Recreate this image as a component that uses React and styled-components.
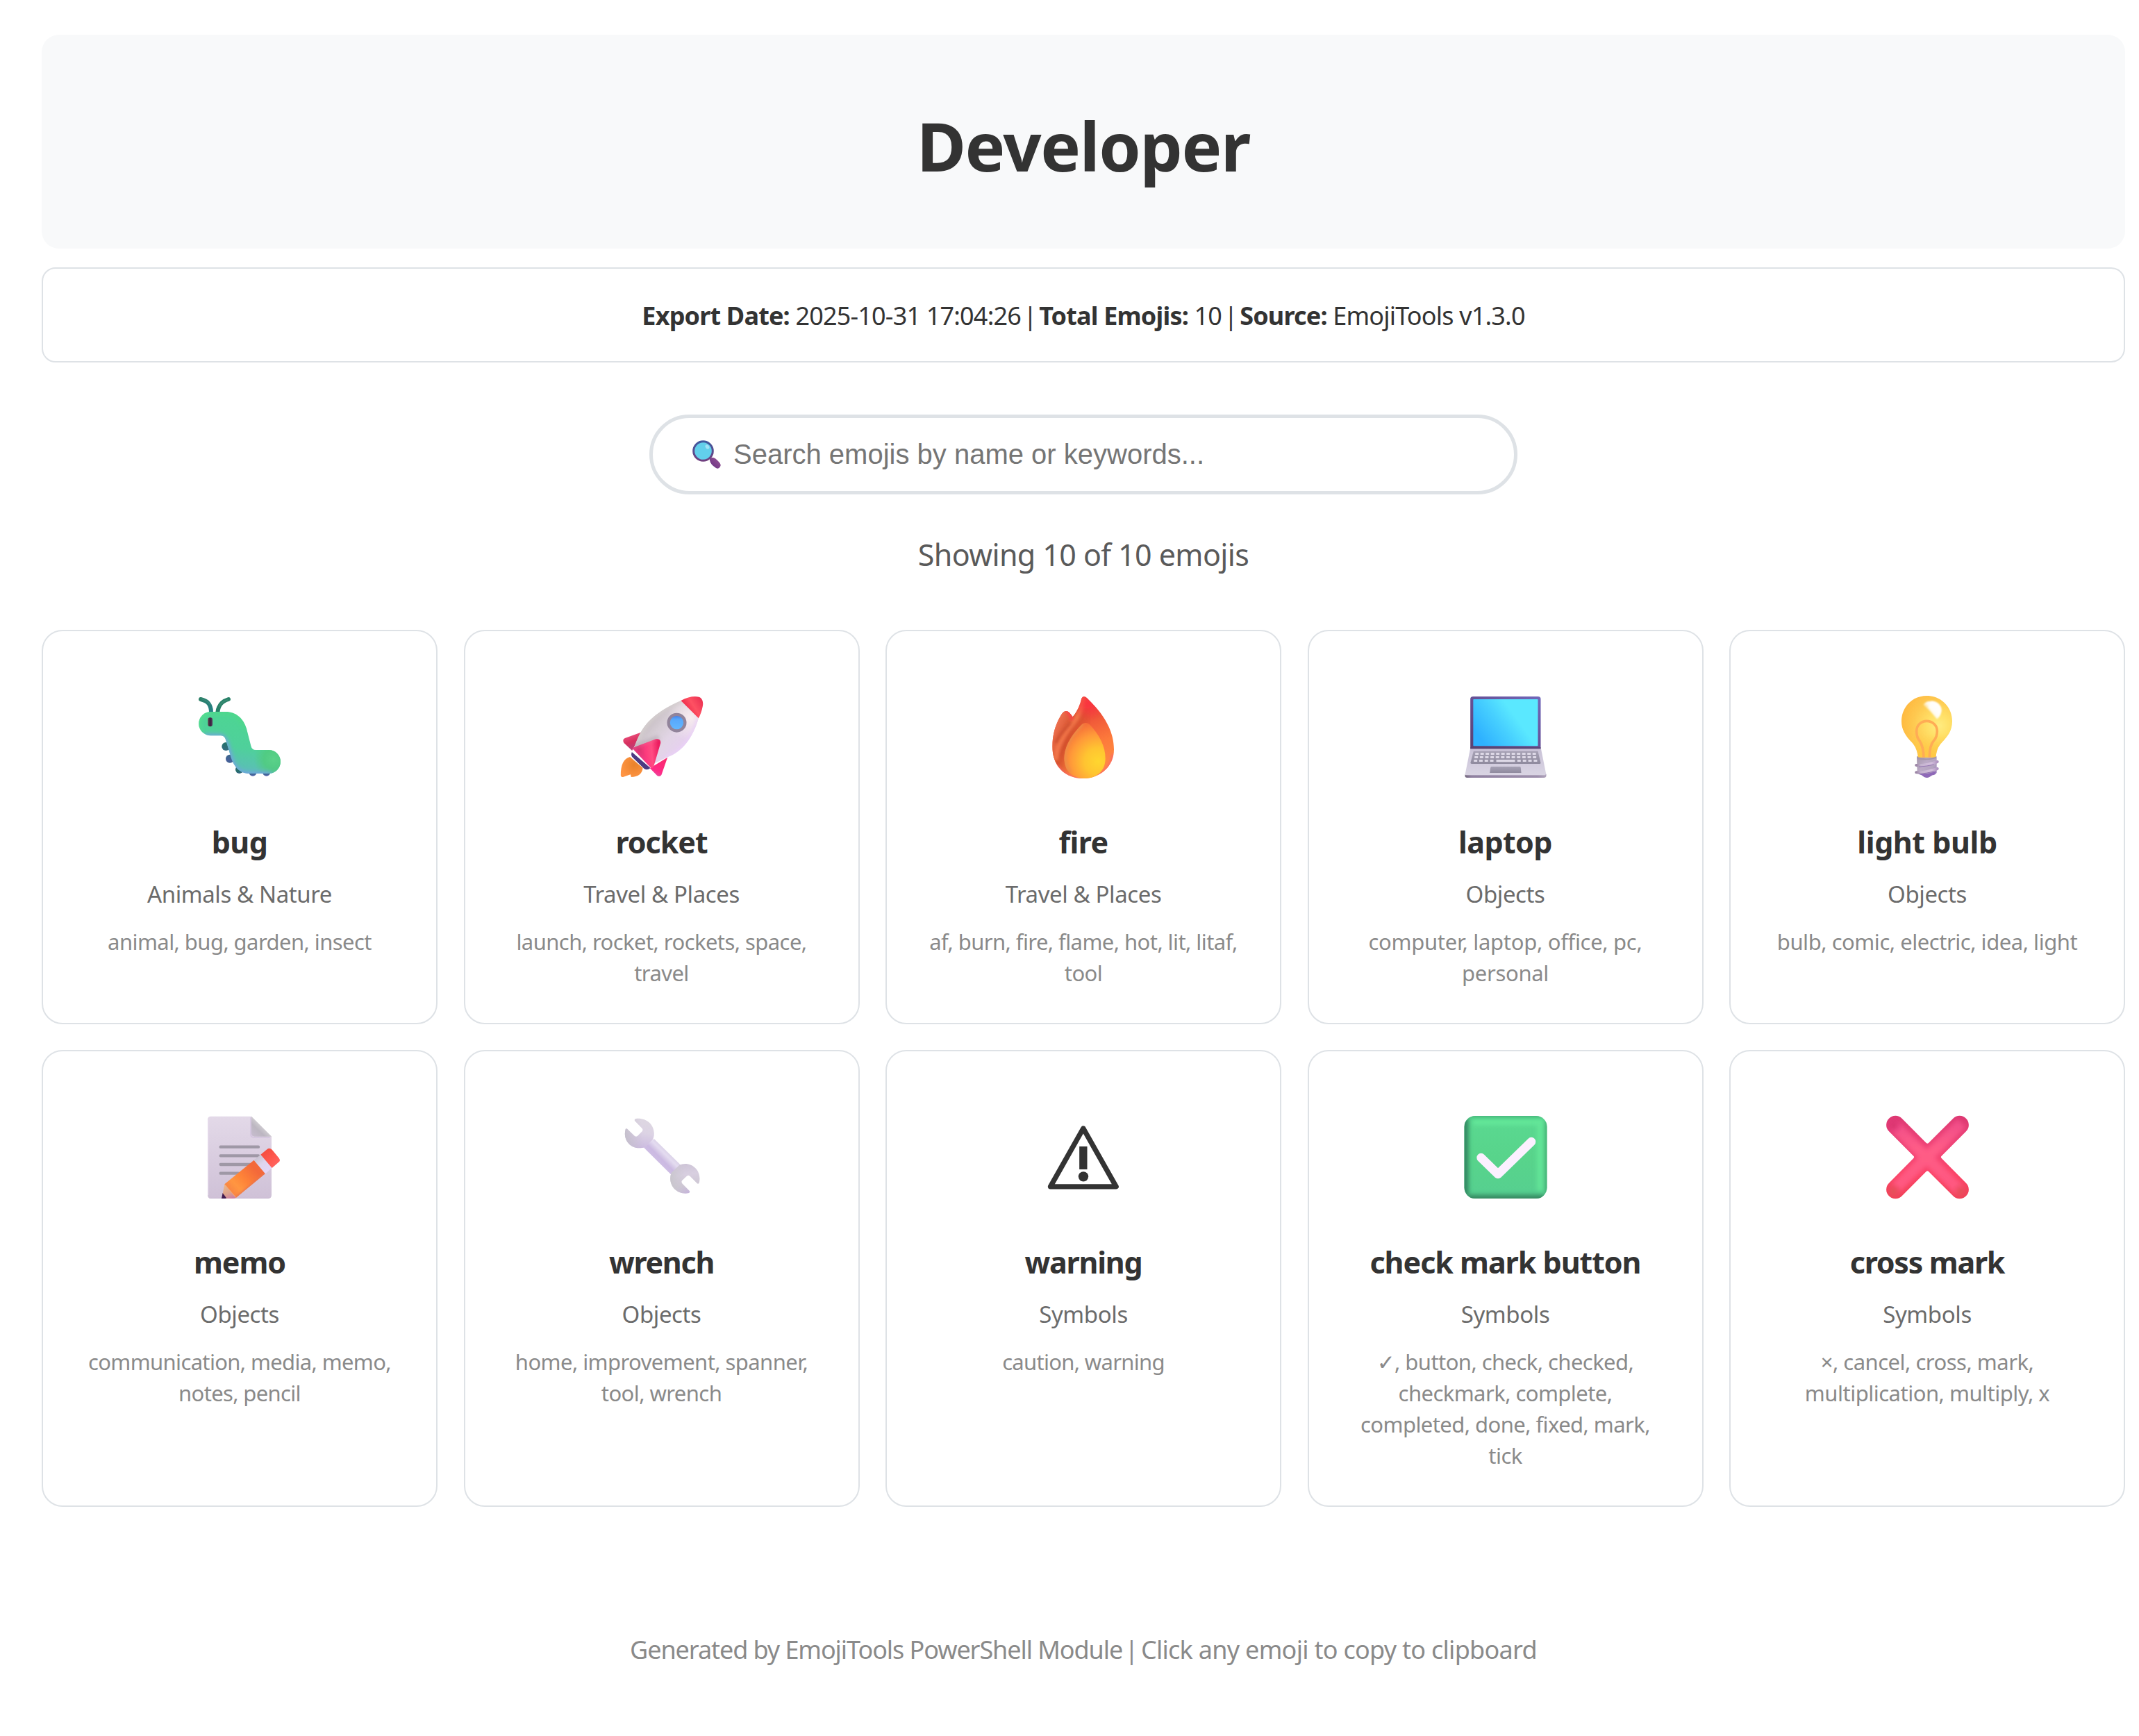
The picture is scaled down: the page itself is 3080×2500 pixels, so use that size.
import React, { useState } from 'react';
import styled, { createGlobalStyle } from 'styled-components';

const GlobalStyle = createGlobalStyle`
  * { box-sizing: border-box; }
  body {
    margin: 0;
    background: #ffffff;
    color: #333333;
    font-family: "Noto Sans", "Open Sans", "DejaVu Sans", sans-serif;
  }
`;

const Page = styled.main`
  width: 3080px;
  min-height: 2500px;
  padding: 50px 20px 0 60px;
  display: flex;
  flex-direction: column;
  align-items: stretch;
`;

const Header = styled.header`
  height: 308px;
  border-radius: 25px;
  background: #f8f9fa;
  display: flex;
  align-items: center;
  justify-content: center;
  padding-top: 10px;
`;

const Title = styled.h1`
  margin: 0;
  font-size: 97px;
  line-height: 150px;
  font-weight: 700;
  letter-spacing: -1.35px;
`;

const Info = styled.section`
  height: 137px;
  margin-top: 27px;
  padding-top: 1px;
  border: 2px solid #dee2e6;
  border-radius: 20px;
  display: flex;
  align-items: center;
  justify-content: center;
  white-space: pre;
  font-size: 36px;
  letter-spacing: -0.82px;
`;

const Divider = styled.span`
  margin: 0 -5px;
`;

const Search = styled.label`
  width: 1250px;
  height: 115px;
  margin: 75px auto 0;
  align-self: center;
  border: 5px solid #dee2e6;
  border-radius: 62px;
  padding: 0 50px 0 57px;
  display: flex;
  align-items: center;
  gap: 17px;
`;

const SearchInput = styled.input`
  flex: 1;
  border: 0;
  outline: 0;
  padding: 0;
  background: transparent;
  font: 40px "Liberation Sans", Arial, sans-serif;
  color: #333333;
  &::placeholder { color: #757575; opacity: 1; }
`;

const Count = styled.p`
  margin: 57px 0 0;
  text-align: center;
  font-size: 43px;
  line-height: 60px;
  letter-spacing: -0.6px;
  color: #5a5a5a;
`;

const Grid = styled.section`
  margin-top: 78px;
  display: grid;
  grid-template-columns: repeat(5, 570px);
  gap: 37.5px;
`;

const Card = styled.article`
  border: 2px solid #dee2e6;
  border-radius: 30px;
  padding: 71px 50px 48.5px;
  display: flex;
  flex-direction: column;
  align-items: center;
  text-align: center;
  cursor: pointer;
  background: #ffffff;
`;

const Name = styled.h2`
  margin: 43px 0 0;
  font-size: 43px;
  line-height: 60px;
  font-weight: 700;
  letter-spacing: ${(p) => p.$tracking ?? -1.05}px;
  white-space: nowrap;
`;

const Category = styled.div`
  margin-top: 20px;
  font-size: 33px;
  line-height: 50px;
  letter-spacing: -0.4px;
  color: #6b6b6b;
`;

const Keywords = styled.div`
  margin-top: 21px;
  width: 466px;
  font-size: 31px;
  line-height: 45px;
  letter-spacing: ${(p) => p.$tracking ?? -0.57}px;
  color: #8a8a8a;
  min-height: 90px;
`;

const Footer = styled.footer`
  margin-top: 176px;
  display: flex;
  justify-content: center;
  white-space: pre;
  font-size: 36px;
  line-height: 60px;
  color: #8a8a8a;
`;

const Credit = styled.span`
  letter-spacing: -1.08px;
`;

const Hint = styled.span`
  letter-spacing: -0.72px;
`;

function Art({ dx = 0, dy = 0, children }) {
  return (
    <svg width="170" height="160" viewBox={`${dx} ${dy} 510 480`} aria-hidden="true">
      {children}
    </svg>
  );
}

const LG = ({ id, a = [0, 0, 0, 1], stops, user }) => (
  <linearGradient id={id} x1={a[0]} y1={a[1]} x2={a[2]} y2={a[3]} gradientUnits={user ? 'userSpaceOnUse' : 'objectBoundingBox'}>
    {stops.map(([o, c, op = 1]) => <stop key={o} offset={o} stopColor={c} stopOpacity={op} />)}
  </linearGradient>
);
const RG = ({ id, c, r, stops }) => (
  <radialGradient id={id} cx={c[0]} cy={c[1]} r={r} gradientUnits="userSpaceOnUse">
    {stops.map(([o, col, op = 1]) => <stop key={o} offset={o} stopColor={col} stopOpacity={op} />)}
  </radialGradient>
);
const Blur = ({ id, s }) => (
  <filter id={id} filterUnits="userSpaceOnUse" x="-50" y="-50" width="620" height="600"><feGaussianBlur stdDeviation={s} /></filter>
);

const bugBody = 'M130 135H195C240 135 272 164 285 208L304 282Q308 300 325 300H381A51 51 0 0 1 381 402H298C254 402 230 370 218 332L195 256Q190 238 174 238H130A51.500 51.500 0 0 1 130 135Z';
const Bug = () => (
  <Art>
    <defs>
      <LG id="bugG" user a={[270, 150, 225, 400]} stops={[[0, '#4dd593'], [0.55, '#4fd09b'], [1, '#5ebabd']]} />
      <LG id="bugF" user a={[0, 265, 0, 414]} stops={[[0, '#237269'], [0.55, '#46609a'], [0.85, '#236d68'], [1, '#5863b5']]} />
      <LG id="bugA" user a={[80, 75, 140, 135]} stops={[[0, '#2b7f64'], [1, '#258087']]} />
      <RG id="bugT" c={[402, 340]} r="85" stops={[[0, '#5bd28a'], [0.5, '#50cb7c', 0.8], [1, '#50cb7c', 0]]} />
      <LG id="bugE" a={[0, 0, 1, 0]} stops={[[0, '#683e4d'], [0.5, '#35223c'], [1, '#5b3d60']]} />
      <Blur id="bugB" s="10" />
      <clipPath id="bugC"><path d={bugBody} /></clipPath>
    </defs>
    <g fill="url(#bugF)">
      <circle cx="196" cy="285" r="18" /><circle cx="213" cy="338" r="18" /><circle cx="254" cy="385" r="17" />
      <circle cx="312" cy="396" r="17" /><circle cx="371" cy="396" r="17" />
    </g>
    <g fill="none" strokeLinecap="round" strokeWidth="18">
      <path d="M87 81C116 88 132 102 132 138" stroke="url(#bugA)" />
      <path d="M207 81C178 90 163 106 160 138" stroke="#288068" />
      <path d="M204 83C182 90 172 99 168 112" stroke="#45957c" strokeWidth="5" opacity=".6" />
      <path d="M91 79C107 85 120 90 128 104" stroke="#489383" strokeWidth="4" opacity=".55" />
    </g>
    <path d={bugBody} fill="url(#bugG)" />
    <path d={bugBody} fill="url(#bugT)" />
    <g clipPath="url(#bugC)">
      <path d="M100 246H168Q184 246 193 272L212 340C228 394 252 410 300 410H390" fill="none" stroke="#75a0e6" strokeWidth="28" filter="url(#bugB)" />
      <path d="M130 138H198C238 139 266 167 280 210" fill="none" stroke="#4fdb80" strokeWidth="8" filter="url(#bugB)" />
      <path d="M124 138A50 50 0 0 0 88 220" fill="none" stroke="#5ae688" strokeWidth="10" filter="url(#bugB)" />
    </g>
    <rect x="118" y="160" width="20" height="39" rx="10" fill="url(#bugE)" />
  </Art>
);

const rocketBody = 'M128 292C155 205 198 145 330 87L406 163C382 247 336 310 267 333L207 362Z';
const rocketFin = 'M119 292L218 254C236 249 244 259 242 271L212 372Q206 382 197 374Z';
const Rocket = () => (
  <Art dx={-7.5}>
    <defs>
      <LG id="rkB" user a={[180, 175, 330, 310]} stops={[[0, '#c5bcc1'], [0.3, '#d6cdd5'], [0.6, '#e2d5e6'], [1, '#e7cff0']]} />
      <LG id="rkN" user a={[352, 135, 422, 90]} stops={[[0, '#ec2648'], [0.5, '#fe5163'], [1, '#ed3454']]} />
      <LG id="rkF" user a={[148, 315, 235, 308]} stops={[[0, '#d8356f'], [0.35, '#fc3b7d'], [0.65, '#ff4c82'], [1, '#ec1d60']]} />
      <LG id="rkL" user a={[110, 240, 126, 288]} stops={[[0, '#e54a76'], [0.5, '#d9305f'], [1, '#bf3c71']]} />
      <LG id="rkR" user a={[250, 340, 218, 412]} stops={[[0, '#fa2b70'], [0.7, '#ff2a86'], [1, '#e84ba0']]} />
      <RG id="rkO" c={[128, 365]} r="62" stops={[[0, '#e9822b'], [1, '#ff9544']]} />
      <LG id="rkW" stops={[[0, '#3d70e6'], [0.3, '#58a8fb'], [1, '#65b9ff']]} />
      <RG id="rkH" c={[370, 160]} r="100" stops={[[0, '#f7ecef'], [1, '#f7ecef', 0]]} />
      <Blur id="rkBl" s="8" />
      <clipPath id="rkC"><path d={rocketBody} /></clipPath>
      <clipPath id="rkFC"><path d={rocketFin} /></clipPath>
    </defs>
    <path d="M110 330C82 337 70 365 70 410Q71 419 80 417L112 406L115 417C145 416 164 402 165 377Z" fill="url(#rkO)" />
    <path d="M118 309Q112 325 123 334L171 381Q185 390 198 378Z" fill="#4b3b82" />
    <path d="M163 222L88 249Q75 255 84 270L119 303Z" fill="url(#rkL)" />
    <path d="M272 332L246 407Q240 418 228 412L196 379Z" fill="url(#rkR)" />
    <path d={rocketBody} fill="url(#rkB)" />
    <path d={rocketBody} fill="url(#rkH)" />
    <g clipPath="url(#rkC)">
      <path d="M130 290C158 210 198 146 330 84" stroke="#d6d0d0" strokeWidth="16" fill="none" filter="url(#rkBl)" />
      <path d="M406 163C380 245 336 310 267 333" stroke="#ead1f9" strokeWidth="12" fill="none" filter="url(#rkBl)" />
      <path d="M115 292L234 246" stroke="#b3a7b0" strokeWidth="22" opacity=".6" filter="url(#rkBl)" />
    </g>
    <path d="M330 87C359 71 386 66 408 71C421 75 428 91 424 111Q418 142 406 163Z" fill="url(#rkN)" />
    <circle cx="312" cy="182" r="35.500" fill="url(#rkW)" stroke="#92849b" strokeWidth="13" />
    <path d={rocketFin} fill="url(#rkF)" />
    <g clipPath="url(#rkFC)">
      <path d="M119 292L197 375" stroke="#ff3a9a" strokeWidth="12" opacity=".7" filter="url(#rkBl)" />
      <path d="M119 292L228 250" stroke="#ee6896" strokeWidth="9" opacity=".8" filter="url(#rkBl)" />
    </g>
  </Art>
);

const flame = 'M242 69Q248 69 255 75C321 138 372 211 372 298C372 370 315 423 239 423C160 423 106 369 106 285C106 226 124 180 147 144Q162 124 179 138L194 157C213 135 226 105 232 77Q236 69 242 69Z';
const flameIn = 'M235 188Q251 178 266 189C310 235 335 285 335 337C335 388 300 423 247 423C193 423 157 390 157 335C158 280 196 226 235 188Z';
const Fire = () => (
  <Art dx={-15}>
    <defs>
      <LG id="fiG" user a={[190, 90, 300, 390]} stops={[[0, '#ed3c43'], [0.3, '#ef5539'], [0.65, '#fd7b3b'], [1, '#ff8c43']]} />
      <LG id="fiL" user a={[105, 230, 245, 290]} stops={[[0, '#ed704e'], [0.45, '#d3502c'], [1, '#d9552e', 0]]} />
      <RG id="fiI" c={[304, 350]} r="168" stops={[[0, '#ffd62f'], [0.35, '#ffc431'], [0.7, '#ff9a39'], [1, '#f67039']]} />
      <RG id="fiR" c={[262, 100]} r="75" stops={[[0, '#fa343f'], [1, '#fa343f', 0]]} />
      <Blur id="fiB" s="7" />
      <clipPath id="fiC"><path d={flame} /></clipPath>
      <clipPath id="fiIC"><path d={flameIn} /></clipPath>
    </defs>
    <path d={flame} fill="url(#fiG)" />
    <g clipPath="url(#fiC)">
      <rect x="90" y="120" width="180" height="310" fill="url(#fiL)" />
      <path d="M241 70C233 138 208 169 177 207C143 250 121 298 122 345" fill="none" stroke="#f2764a" strokeWidth="22" filter="url(#fiB)" />
      <path d="M186 181C165 204 141 228 120 270" fill="none" stroke="#bf4127" strokeWidth="8" filter="url(#fiB)" />
      <path d="M166 128Q187 147 190 170" fill="none" stroke="#ff4148" strokeWidth="13" filter="url(#fiB)" />
      <path d={flame} fill="url(#fiR)" />
      <path d="M120 365C165 425 205 426 245 424C318 424 365 373 370 318" fill="none" stroke="#fa6170" strokeWidth="12" filter="url(#fiB)" />
    </g>
    <path d={flameIn} fill="url(#fiI)" />
    <g clipPath="url(#fiIC)">
      <path d="M236 186C170 252 130 329 183 397" fill="none" stroke="#e99049" strokeWidth="14" filter="url(#fiB)" />
    </g>
  </Art>
);

const keyRow = (y, x0, step, n) =>
  Array.from({ length: n }, (_, i) => <rect key={i} x={x0 + i * step} y={y} width="15" height="9" rx="1.500" fill="#ded9e7" />);
const Laptop = () => (
  <Art dx={-22.5}>
    <defs>
      <LG id="lpF" a={[1, 0, 0, 1]} stops={[[0, '#7168bb'], [0.5, '#665196'], [1, '#5a4170']]} />
      <LG id="lpS" user a={[285, 170, 140, 275]} stops={[[0, '#5ae8ff'], [0.4, '#47d0ff'], [1, '#2eb1ff']]} />
      <LG id="lpK" stops={[[0, '#a6a1b4'], [1, '#8f8a9e']]} />
      <LG id="lpB" stops={[[0, '#c9c2d7'], [1, '#d9d4e3']]} />
      <LG id="lpE" a={[0, 0, 1, 0]} stops={[[0, '#75697f'], [0.08, '#8f80a0'], [0.9, '#9d8fac'], [1, '#b1a5bd']]} />
    </defs>
    <path d="M80 293L58 403V409H407V403L385 293Z" fill="url(#lpB)" />
    <path d="M57 405Q57 409 63 409H402L408 404V412Q407 420 398 420H66Q57 420 57 412Z" fill="url(#lpE)" />
    <path d="M80 295V80Q80 69 92 69H372Q384 69 384 80V295Z" fill="url(#lpF)" />
    <path d="M80 288H384V295H80Z" fill="#59456e" opacity=".7" />
    <rect x="92.500" y="81" width="279.500" height="201.500" rx="2" fill="url(#lpS)" />
    <path d="M94 305H372L384 356Q384 360 379 360H86Q80 360 81 355Z" fill="url(#lpK)" />
    {keyRow(312, 101, 22.5, 12)}
    {keyRow(327, 98, 22.9, 12)}
    {keyRow(342, 95, 23.4, 4)}
    <rect x="192" y="342" width="81" height="10" rx="1.500" fill="#ded9e7" />
    {keyRow(342, 283, 23.6, 4)}
    <path d="M171 372H294Q298 373 298 377L300 399H164L167 377Q168 372 171 372Z" fill="url(#lpK)" />
  </Art>
);

const bulbGlass = 'M253 66C317 66 363 116 363 176C363 219 342 242 319 267C300 288 296 304 292 332H216C212 302 205 285 188 266C160 237 144 211 144 176C144 115 190 66 253 66Z';
const Bulb = () => (
  <Art>
    <defs>
      <RG id="buG" c={[306, 195]} r="170" stops={[[0, '#ffec80'], [0.3, '#ffdf66'], [0.65, '#fec950'], [1, '#ffb940']]} />
      <LG id="buH" user a={[302, 102, 258, 142]} stops={[[0, '#ffffff'], [0.55, '#ffffff', 0.9], [1, '#ffffff', 0]]} />
      <LG id="buB" user a={[210, 340, 305, 400]} stops={[[0, '#a89aae'], [0.35, '#bbaac6'], [0.7, '#b3a3c0'], [1, '#9675bb']]} />
      <LG id="buR" user a={[202, 0, 304, 0]} stops={[[0, '#8f7799'], [0.25, '#c4b3cf'], [0.7, '#d3bfdc'], [1, '#aa8dbd']]} />
      <LG id="buY" user a={[0, 230, 0, 332]} stops={[[0, '#ffcf45', 0], [1, '#ffcb43', 0.8]]} />
      <Blur id="buBl" s="3" />
    </defs>
    <path d="M210 328H296V398Q291 408 278 409Q264 420 253 420Q241 419 232 409L212 402Z" fill="url(#buB)" />
    <path d="M214 402Q245 408 292 393Q291 409 276 409Q262 420 253 420Q241 419 231 409Z" fill="#8e68b8" />
    <path d={bulbGlass} fill="url(#buG)" />
    <path d={bulbGlass} fill="url(#buY)" />
    <path d="M238 105Q247 89 272 89C299 90 317 108 316 132Q313 153 298 167Q269 133 238 105Z" fill="url(#buH)" filter="url(#buBl)" />
    <path d="M274 89C299 90 316 108 316 130Q312 153 297 164L259 116Z" fill="#fff" opacity=".65" filter="url(#buBl)" />
    <path d="M240 332Q239 286 222 260C211 248 209 233 209 218C209 194 228 175 253 175S298 194 298 218Q298 243 284 259Q265 280 265 332" fill="none" stroke="#ffac55" strokeWidth="11" />
    <path d="M213 330Q250 345 294 329V336Q248 350 212 339Z" fill="#a596aa" />
    <g fill="none" stroke="url(#buR)" strokeWidth="12" strokeLinecap="round">
      <path d="M208 366Q249 369 299 351" />
      <path d="M208 397Q249 399 299 381" />
    </g>
    <g fill="none" stroke="#8968aa" strokeWidth="2.500"><path d="M219 373Q256 370 284 363" /><path d="M219 404Q256 400 284 393" /></g>
  </Art>
);

const Memo = () => (
  <Art dy={-15}>
    <defs>
      <LG id="meP" stops={[[0, '#e3d9e8'], [1, '#cfc1d7']]} />
      <LG id="meC" user a={[350, 96, 312, 135]} stops={[[0, '#cecbd0'], [0.4, '#bcb6c1'], [1, '#c6bccd']]} />
      <LG id="meY" user a={[320, 280, 215, 375]} stops={[[0, '#f3693a'], [0.45, '#fe8338'], [0.75, '#ff9641'], [1, '#f98543']]} />
      <LG id="meM" user a={[330, 230, 378, 290]} stops={[[0, '#c9c3d0'], [0.45, '#ded5ee'], [1, '#e3d6f8']]} />
      <LG id="meR" user a={[360, 205, 410, 265]} stops={[[0, '#f54d3f'], [0.6, '#ff594f'], [1, '#ff6460']]} />
      <LG id="meW" user a={[190, 350, 215, 408]} stops={[[0, '#edb889'], [0.6, '#dca28b'], [1, '#ce82a2']]} />
      <Blur id="meB" s="5" />
      <clipPath id="meCl"><path d="M190 346L317 242L366 300L239 405Z" /></clipPath>
    </defs>
    <path d="M131 53H306L393 140V393Q393 408 378 408H132Q117 408 117 393V67Q117 53 131 53Z" fill="url(#meP)" />
    <path d="M119 67V394" stroke="#eadff0" strokeWidth="4" opacity=".7" />
    <path d="M124 406H382" stroke="#c6b5d0" strokeWidth="4" opacity=".6" />
    <path d="M303 58V129Q303 144 318 144H386" stroke="#cbb9da" strokeWidth="5" fill="none" opacity=".6" />
    <path d="M306 53L393 140H320Q306 140 306 126Z" fill="url(#meC)" />
    <g stroke="#9f98a6" strokeWidth="13" strokeLinecap="round">
      <path d="M173 185H336M173 223H336M173 261H300M173 299H250" />
    </g>
    <path d="M190 346L317 242L366 300L239 405Z" fill="url(#meY)" />
    <g clipPath="url(#meCl)"><path d="M366 300L239 405" stroke="#ea744e" strokeWidth="9" filter="url(#meB)" /></g>
    <path d="M190 346L239 405Q235 408 226 408H178L183 382Z" fill="url(#meW)" />
    <path d="M182 384L198 406Q196 408 193 408H177Z" fill="#421b50" />
    <path d="M191 347L240 404" stroke="#f7a66b" strokeWidth="3" />
    <path d="M317 242L346 218L395 275L366 301Z" fill="url(#meM)" />
    <path d="M346 218L375 194Q384 187 394 196L425 233Q432 242 426 249L395 276Z" fill="url(#meR)" />
  </Art>
);

const wrenchTop = 'M136 63C178 58 214 86 214 128C214 139 211 148 207 155L176 187C167 189 157 190 151 190C114 190 88 162 88 128Q88 116 91 107Q95 104 98 107L130 138Q137 143 143 137L163 117Q167 111 163 106L131 73Q127 66 136 63Z';
const wrenchEnd = 'M362 385C320 392 284 362 284 321Q284 308 289 297L323 264Q335 258 348 258C384 258 411 287 411 321Q411 333 408 342Q404 346 400 343L369 311Q362 306 355 311L334 331Q330 337 335 343L367 375Q371 382 362 385Z';
const Wrench = () => (
  <Art dx={-7.5} dy={-15}>
    <defs>
      <LG id="wrA" user a={[175, 80, 155, 190]} stops={[[0, '#ddd6e2'], [0.4, '#dcd3e4'], [1, '#cbbae0']]} />
      <LG id="wrL" user a={[88, 140, 165, 130]} stops={[[0, '#c4bfcb'], [1, '#c9c2d1', 0]]} />
      <LG id="wrS" user a={[270, 205, 230, 245]} stops={[[0, '#dcd3e9'], [0.25, '#e4dcf0'], [0.5, '#d6c9e7'], [0.7, '#cbb9e2'], [1, '#cdbde3']]} />
      <LG id="wrB" user a={[330, 265, 350, 386]} stops={[[0, '#cfc6d8'], [0.35, '#d8cfe0'], [0.7, '#cfc8d5'], [1, '#c5b4da']]} />
      <LG id="wrC" user a={[285, 320, 350, 310]} stops={[[0, '#c9c6cd'], [1, '#cdc8d2', 0]]} />
    </defs>
    <path d="M214 150L330 264L288 305L170 188Z" fill="url(#wrS)" />
    <path d={wrenchTop} fill="url(#wrA)" />
    <path d={wrenchTop} fill="url(#wrL)" />
    <path d={wrenchEnd} fill="url(#wrB)" />
    <path d={wrenchEnd} fill="url(#wrC)" />
  </Art>
);

const Warning = () => (
  <Art dx={-15} dy={-15}>
    <path d="M239.500 105L381.500 356.500H97.500Z" fill="none" stroke="#333333" strokeWidth="22" strokeLinejoin="round" />
    <rect x="222.500" y="183" width="34" height="99" fill="#333333" />
    <circle cx="240" cy="313" r="21.500" fill="#333333" />
  </Art>
);

const CheckButton = () => (
  <Art dx={-22.5} dy={-15}>
    <defs>
      <LG id="ckG" stops={[[0, '#5ad991'], [0.5, '#58d48b'], [1, '#56cf90']]} />
      <Blur id="ckB" s="10" />
      <clipPath id="ckC"><rect x="54" y="51" width="357" height="357" rx="47" /></clipPath>
    </defs>
    <rect x="54" y="51" width="357" height="357" rx="47" fill="url(#ckG)" />
    <g clipPath="url(#ckC)">
      <path d="M90 77H390" stroke="#64e89a" strokeWidth="24" filter="url(#ckB)" />
      <path d="M382 70V375" stroke="#64e698" strokeWidth="26" filter="url(#ckB)" />
      <path d="M57 60V400" stroke="#328560" strokeWidth="30" filter="url(#ckB)" />
      <path d="M60 409H405" stroke="#358760" strokeWidth="34" filter="url(#ckB)" />
      <path d="M60 45H405" stroke="#3ba06d" strokeWidth="16" filter="url(#ckB)" />
      <path d="M416 65V390" stroke="#3ca36c" strokeWidth="20" filter="url(#ckB)" />
    </g>
    <path d="M126.500 231.500L199.500 303L343.500 162.500" fill="none" stroke="#fbf0ff" strokeWidth="38" strokeLinecap="round" strokeLinejoin="round" />
  </Art>
);

const crossPath = 'M146 62L251 168Q256 173 261 168L367 62A39 39 0 0 1 423 118L317 224Q312 229 317 234L423 341A39 39 0 0 1 367 397L261 291Q256 286 251 291L146 397A39 39 0 0 1 90 341L196 234Q201 229 196 224L90 118A39 39 0 0 1 146 62Z';
const Cross = () => (
  <Art dy={-15}>
    <defs>
      <LG id="crG" user a={[0, 50, 0, 408]} stops={[[0, '#dd3872'], [0.4, '#ef4275'], [0.7, '#fb4266'], [1, '#f04056']]} />
      <LG id="crH" user a={[0, 80, 0, 385]} stops={[[0, '#f04d88'], [0.35, '#fe5c87'], [1, '#ff587f']]} />
      <RG id="crT" c={[112, 94]} r="40" stops={[[0, '#d9346f', 0.8], [1, '#e0337c', 0]]} />
      <RG id="crL" c={[110, 377]} r="40" stops={[[0, '#e45159'], [1, '#f14761', 0]]} />
      <RG id="crR" c={[400, 377]} r="40" stops={[[0, '#e45159'], [1, '#f14761', 0]]} />
      <Blur id="crB" s="9" />
      <clipPath id="crC"><path d={crossPath} /></clipPath>
    </defs>
    <path d={crossPath} fill="url(#crG)" />
    <g clipPath="url(#crC)">
      <path d="M118 98L396 374M404 82L118 364" stroke="url(#crH)" strokeWidth="50" filter="url(#crB)" />
      <path d={crossPath} fill="url(#crT)" />
      <path d={crossPath} fill="url(#crL)" />
      <path d={crossPath} fill="url(#crR)" />
    </g>
  </Art>
);

const Magnifier = () => (
  <svg width="42" height="42" viewBox="0 0 42 42" aria-hidden="true">
    <defs>
      <LG id="mgS" stops={[[0, '#40599f'], [1, '#70407f']]} />
      <LG id="mgH" a={[1, 0, 0, 1]} stops={[[0, '#9b5698'], [1, '#643080']]} />
    </defs>
    <path d="M25 29Q24 25 29 25Q32 24 38 31Q42 35 40 38Q38 42 34 40Q26 35 25 29Z" fill="url(#mgH)" />
    <circle cx="15.500" cy="15.500" r="13.800" fill="#62cfeb" stroke="url(#mgS)" strokeWidth="3" />
    <ellipse cx="21.500" cy="9.500" rx="2.500" ry="3.500" fill="#a3e3f6" transform="rotate(-35 21.500 9.500)" />
  </svg>
);

const EMOJIS = [
  { name: 'bug', category: 'Animals & Nature', keywords: 'animal, bug, garden, insect', Icon: Bug, nameTracking: -0.6 },
  { name: 'rocket', category: 'Travel & Places', keywords: 'launch, rocket, rockets, space, travel', Icon: Rocket },
  { name: 'fire', category: 'Travel & Places', keywords: 'af, burn, fire, flame, hot, lit, litaf, tool', Icon: Fire, nameTracking: -0.6, tracking: -0.57 },
  { name: 'laptop', category: 'Objects', keywords: 'computer, laptop, office, pc, personal', Icon: Laptop, nameTracking: -0.6, tracking: -0.3 },
  { name: 'light bulb', category: 'Objects', keywords: 'bulb, comic, electric, idea, light', Icon: Bulb, nameTracking: -0.45, tracking: -0.47 },
  { name: 'memo', category: 'Objects', keywords: 'communication, media, memo, notes, pencil', Icon: Memo, tracking: -0.65 },
  { name: 'wrench', category: 'Objects', keywords: 'home, improvement, spanner, tool, wrench', Icon: Wrench, nameTracking: -1.3 },
  { name: 'warning', category: 'Symbols', keywords: 'caution, warning', Icon: Warning, nameTracking: -1.25, tracking: -0.7 },
  { name: 'check mark button', category: 'Symbols', keywords: '✓, button, check, checked, checkmark, complete, completed, done, fixed, mark, tick', Icon: CheckButton },
  { name: 'cross mark', category: 'Symbols', keywords: '×, cancel, cross, mark, multiplication, multiply, x', Icon: Cross, nameTracking: -1.3, tracking: -0.5 },
];

export default function App() {
  const [query, setQuery] = useState('');
  const q = query.trim().toLowerCase();
  const shown = EMOJIS.filter((e) => !q || e.name.includes(q) || e.keywords.includes(q));
  return (
    <>
      <GlobalStyle />
      <Page>
        <Header><Title>Developer</Title></Header>
        <Info>
          <span>
            <b>Export Date:</b> 2025-10-31 17:04:26 <Divider>|</Divider> <b>Total Emojis:</b> 10 <Divider>|</Divider> <b>Source:</b> EmojiTools v1.3.0
          </span>
        </Info>
        <Search>
          <Magnifier />
          <SearchInput value={query} onChange={(e) => setQuery(e.target.value)} placeholder="Search emojis by name or keywords..." />
        </Search>
        <Count>Showing {shown.length} of {EMOJIS.length} emojis</Count>
        <Grid>
          {shown.map(({ name, category, keywords, Icon, tracking, nameTracking }) => (
            <Card key={name}>
              <Icon />
              <Name $tracking={nameTracking}>{name}</Name>
              <Category>{category}</Category>
              <Keywords $tracking={tracking}>{keywords}</Keywords>
            </Card>
          ))}
        </Grid>
        <Footer>
          <Credit>Generated by EmojiTools PowerShell Module </Credit>
          <Divider>|</Divider>
          <Hint> Click any emoji to copy to clipboard</Hint>
        </Footer>
      </Page>
    </>
  );
}
